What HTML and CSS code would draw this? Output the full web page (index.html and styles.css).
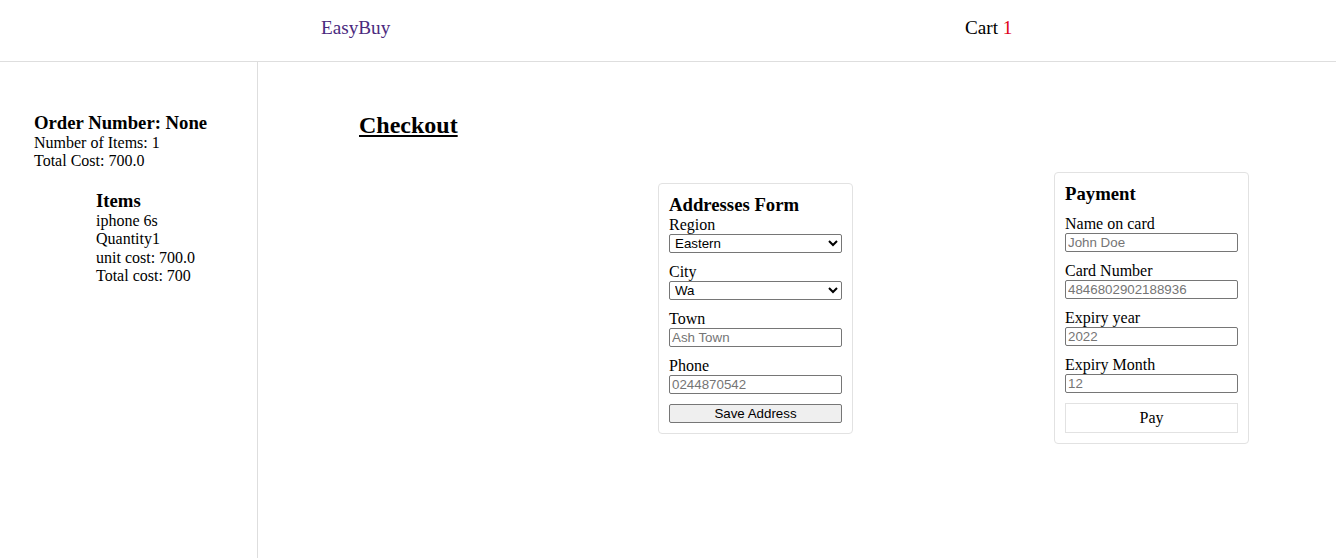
FILE: index.html
```html
<!DOCTYPE html>
<html>
<head>
<meta charset="utf-8">
<title>EasyBuy Checkout</title>
<link rel="stylesheet" href="styles.css">
</head>
<body>
<header class="topbar">
  <a class="brand">EasyBuy</a>
  <a class="cart">Cart <span class="cart-count">1</span></a>
</header>
<div class="page">
  <aside class="sidebar">
    <h3 class="order-title">Order Number: None</h3>
    <div class="line">Number of Items: 1</div>
    <div class="line">Total Cost: 700.0</div>
    <div class="items">
      <h3 class="items-title">Items</h3>
      <div class="line">iphone 6s</div>
      <div class="line">Quantity1</div>
      <div class="line">unit cost: 700.0</div>
      <div class="line">Total cost: 700</div>
    </div>
  </aside>
  <main class="main">
    <h2 class="checkout-title">Checkout</h2>
    <div class="cards">
      <form class="card address-card">
        <h3 class="card-title">Addresses Form</h3>
        <div class="group">
          <label class="label">Region</label>
          <select class="control"><option>Eastern</option></select>
        </div>
        <div class="group">
          <label class="label">City</label>
          <select class="control"><option>Wa</option></select>
        </div>
        <div class="group">
          <label class="label">Town</label>
          <input class="control" type="text" placeholder="Ash Town">
        </div>
        <div class="group">
          <label class="label">Phone</label>
          <input class="control" type="text" placeholder="0244870542">
        </div>
        <button class="save-btn" type="button">Save Address</button>
      </form>
      <form class="card payment-card">
        <h3 class="card-title spaced">Payment</h3>
        <div class="group">
          <label class="label">Name on card</label>
          <input class="control" type="text" placeholder="John Doe">
        </div>
        <div class="group">
          <label class="label">Card Number</label>
          <input class="control" type="text" placeholder="4846802902188936">
        </div>
        <div class="group">
          <label class="label">Expiry year</label>
          <input class="control" type="text" placeholder="2022">
        </div>
        <div class="group">
          <label class="label">Expiry Month</label>
          <input class="control" type="text" placeholder="12">
        </div>
        <button class="pay-btn" type="button">Pay</button>
      </form>
    </div>
  </main>
</div>
</body>
</html>
```

FILE: styles.css
```css
* { box-sizing: border-box; }

html, body {
  margin: 0;
  padding: 0;
  background: #fff;
}

body {
  font-family: "Liberation Serif", "Times New Roman", serif;
  font-size: 16px;
  color: #000;
  height: 100vh;
  display: flex;
  flex-direction: column;
  overflow: hidden;
}

.topbar {
  height: 62px;
  flex: 0 0 62px;
  border-bottom: 1px solid #dedede;
  display: flex;
  align-items: center;
  padding-left: 321px;
  padding-bottom: 5px;
  font-size: 19.2px;
}

.brand {
  color: #4a2a7e;
  width: 644px;
}

.cart {
  color: #000;
}

.cart-count {
  color: #e0001b;
}

.page {
  flex: 1;
  display: flex;
  min-height: 0;
}

.sidebar {
  width: 258px;
  flex: 0 0 258px;
  border-right: 1px solid #dedede;
  padding: 50px 0 0 34px;
}

.order-title,
.items-title {
  margin: 0;
  font-size: 18.72px;
  font-weight: bold;
  line-height: 21.5px;
}

.line {
  line-height: 18.4px;
}

.items {
  margin: 20px 0 0 62px;
}

.main {
  flex: 1;
  padding: 49px 0 0 101px;
}

.checkout-title {
  margin: 0;
  font-size: 24px;
  line-height: 28px;
  font-weight: bold;
  text-decoration: underline;
}

.cards {
  margin-top: 33px;
  padding-left: 299px;
  display: flex;
  align-items: center;
  gap: 201px;
}

.card {
  width: 195px;
  border: 1px solid #e2e2e2;
  border-radius: 4px;
  padding: 10px;
  margin: 0;
}

.card-title {
  margin: 0;
  font-size: 18.72px;
  line-height: 22px;
  font-weight: bold;
}

.card-title.spaced {
  margin-bottom: 10px;
}

.group {
  margin-bottom: 10px;
}

.label {
  display: block;
  line-height: 18px;
  height: 18px;
}

.control {
  display: block;
  width: 173px;
  height: 19px;
  margin: 0;
  font-family: "Liberation Sans", Arial, sans-serif;
  font-size: 13.33px;
  color: #000;
  border: 1px solid #767676;
  border-radius: 2px;
  padding: 0 2px;
  background: #fff;
}

.control::placeholder {
  color: #757575;
}

select.control {
  padding: 0 0 0 1px;
}

.save-btn {
  display: block;
  width: 173px;
  height: 19px;
  margin: 0;
  padding: 0;
  font-family: "Liberation Sans", Arial, sans-serif;
  font-size: 13.33px;
  color: #000;
  background: #efefef;
  border: 1px solid #767676;
  border-radius: 2px;
}

.pay-btn {
  display: block;
  width: 173px;
  height: 30px;
  margin: 0;
  padding: 0;
  font-family: "Liberation Serif", "Times New Roman", serif;
  font-size: 16px;
  color: #000;
  background: #fff;
  border: 1px solid #e2e2e2;
}
```
